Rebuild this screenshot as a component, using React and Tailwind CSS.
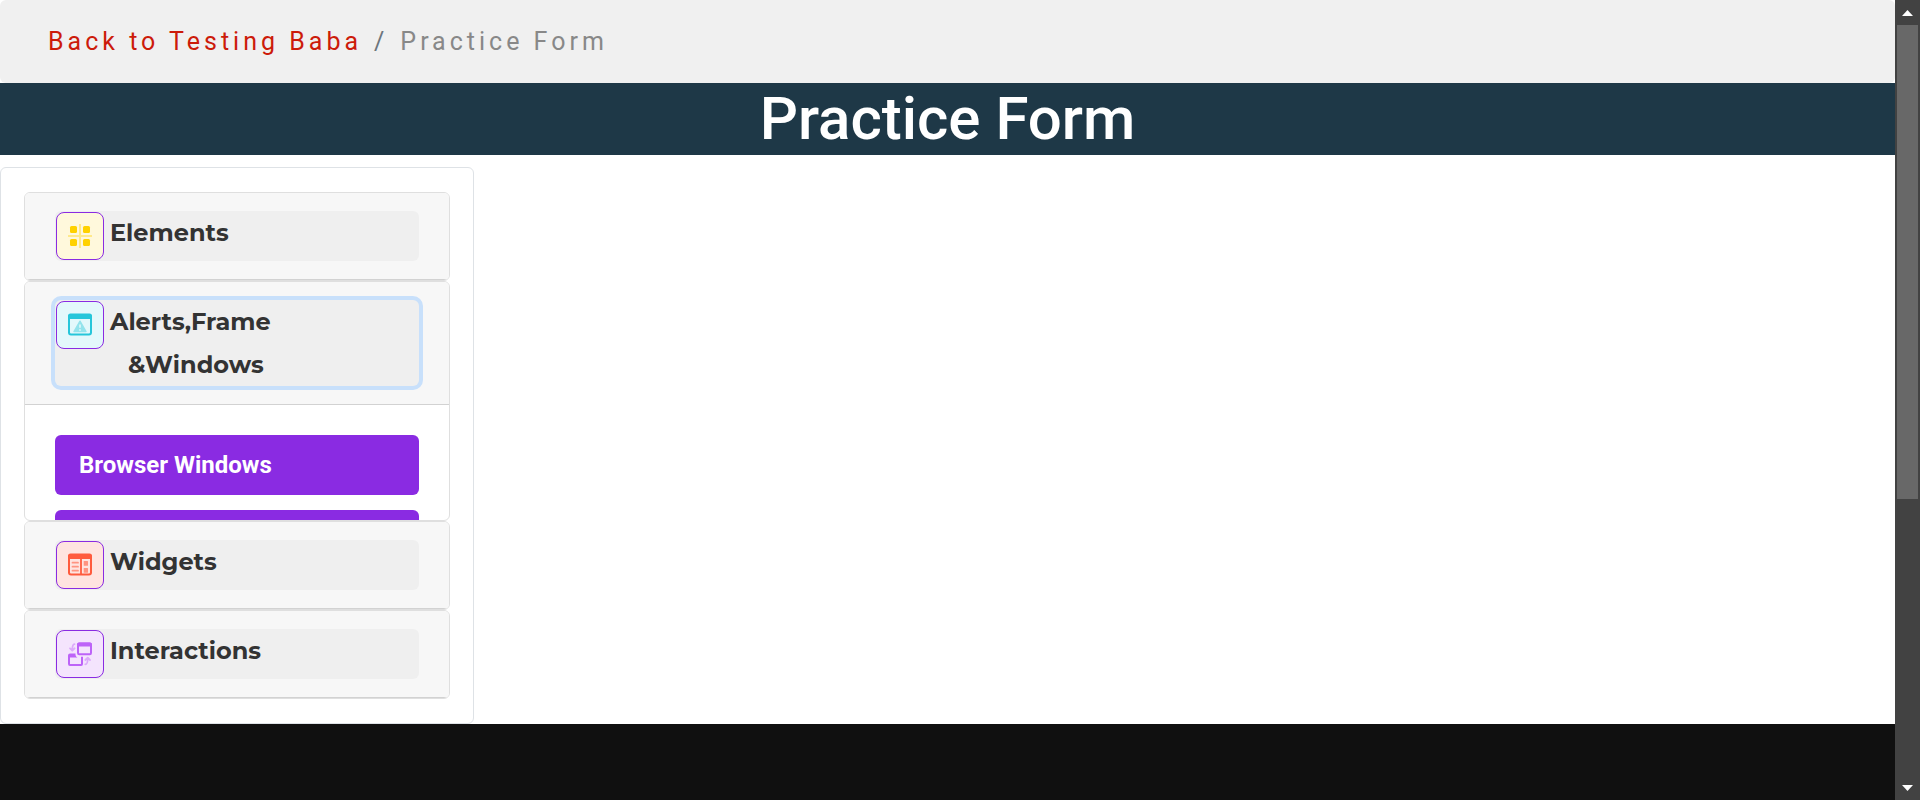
import React from "react";

function ElementsIcon() {
  return (
    <svg viewBox="0 0 24 24" className="size-6" aria-hidden="true">
      <path d="M12 0.5v23M0.5 12h23" stroke="#ffe98a" strokeWidth="2" strokeLinecap="round" />
      <g fill="#ffd100">
        <rect x="2" y="2" width="7" height="7" rx="1.5" />
        <rect x="15" y="2" width="7" height="7" rx="1.5" />
        <rect x="2" y="15" width="7" height="7" rx="1.5" />
        <rect x="15" y="15" width="7" height="7" rx="1.5" />
      </g>
    </svg>
  );
}

function AlertsIcon() {
  return (
    <svg viewBox="0 0 24 24" className="size-6" aria-hidden="true">
      <rect x="1" y="2" width="22" height="19.5" rx="2" fill="none" stroke="#26c6da" strokeWidth="2" />
      <path d="M0 6V3a2.500 2.500 0 0 1 2.500-2.500h19A2.500 2.500 0 0 1 24 3v3z" fill="#26c6da" />
      <path d="M12 8.200L18 18.500H6z" fill="#93e3ec" stroke="#93e3ec" strokeWidth="1.400" strokeLinejoin="round" />
      <path d="M12 11.500v3.200M12 16.200v1.600" stroke="#e3f8fb" strokeWidth="1.600" />
    </svg>
  );
}

function WidgetsIcon() {
  return (
    <svg viewBox="0 0 24 24" className="size-6" aria-hidden="true">
      <rect x="1" y="2" width="22" height="19.5" rx="2" fill="none" stroke="#ff5b3e" strokeWidth="2" />
      <path d="M0 6V3a2.500 2.500 0 0 1 2.500-2.500h19A2.500 2.500 0 0 1 24 3v3z" fill="#ff5b3e" />
      <path d="M13 5v16.500" stroke="#ff5b3e" strokeWidth="1.800" />
      <path d="M4.500 9.700h5.500M4.500 13.700h5.500M4.500 17.700h5.500" stroke="#ff9481" strokeWidth="1.800" strokeLinecap="round" />
      <rect x="15.700" y="8" width="4.300" height="4.700" rx="0.500" fill="#ff9481" />
      <rect x="15.700" y="15" width="4.300" height="4.700" rx="0.500" fill="#ff9481" />
    </svg>
  );
}

function InteractionsIcon() {
  return (
    <svg viewBox="0 0 24 24" className="size-6" aria-hidden="true">
      <path d="M7.500 11.500H2a2 2 0 0 0-2 2V22a2 2 0 0 0 2 2h11a2 2 0 0 0 2-2v-7.200h-2V22H2v-6.500h7.500A3 3 0 0 1 7.500 13z" fill="#bd63f8" />
      <rect x="10" y="1.500" width="13" height="10.700" rx="1.200" fill="none" stroke="#bd63f8" strokeWidth="2" />
      <path d="M9 4.500V2.500a2 2 0 0 1 2-2h11a2 2 0 0 1 2 2v2z" fill="#bd63f8" />
      <g fill="none" stroke="#dcaafb" strokeWidth="1.800" strokeLinecap="round" strokeLinejoin="round">
        <path d="M6.500 2.200C4.800 2.400 4.300 3.500 4.300 8M2 6.300l2.300 2.300 2.300-2.300" />
        <path d="M17.300 22.300c1.900-.2 2.400-1.300 2.400-5.900M17.300 18l2.400-2.300L22 18" />
      </g>
    </svg>
  );
}

function Section({ icon, tile, title, subtitle, open, children }) {
  return (
    <section className="overflow-hidden rounded-md border border-[#dfdfdf]">
      <h2 className="border-b border-[#d2d2d2] bg-[#f7f7f7] px-[30px] py-[18px]">
        <button
          type="button"
          aria-expanded={open}
          className={
            open
              ? "flex w-full items-start gap-[6px] rounded-md bg-[#efefef] px-px text-left text-[#333333] ring-4 ring-[#c8e0fb]"
              : "flex w-full items-start gap-[6px] rounded-md bg-[#efefef] px-px text-left text-[#333333]"
          }
        >
          <span className={`my-px flex size-12 shrink-0 items-center justify-center rounded-lg border border-[#8a2be2] ${tile}`}>
            {icon}
          </span>
          <span className="font-[Montserrat,Inter,sans-serif] text-2xl leading-[43px] font-bold">
            {title}
            {subtitle && <span className="block pl-[18px]">{subtitle}</span>}
          </span>
        </button>
      </h2>
      {children}
    </section>
  );
}

function Scrollbar() {
  return (
    <div className="sticky top-0 flex h-screen w-[25px] shrink-0 flex-col items-center bg-[#424242]" aria-hidden="true">
      <div className="flex h-[25px] items-center justify-center">
        <svg viewBox="0 0 11 6" className="h-[6px] w-[11px]"><path d="M5.500 0L11 6H0z" fill="#fff" /></svg>
      </div>
      <div className="h-[59.25%] w-[21px] bg-[#686868]" />
      <div className="mt-auto flex h-[25px] items-center justify-center">
        <svg viewBox="0 0 11 6" className="h-[6px] w-[11px]"><path d="M0 0h11L5.500 6z" fill="#fff" /></svg>
      </div>
    </div>
  );
}

export default function App() {
  return (
    <div className="flex min-h-screen bg-white font-[Roboto,sans-serif]">
      <div className="flex min-w-0 flex-1 flex-col">
        <nav aria-label="Breadcrumb" className="flex flex-wrap gap-x-3 rounded-md bg-[#f0f0f0] px-12 pt-6 pb-[23px] text-[25px] leading-9 tracking-[4px] text-[#888888]">
          <a href="#home" className="text-[#cc1b0a]">Back to Testing Baba</a>
          <span className="text-[#6c757d]">/</span>
          <span>Practice Form</span>
        </nav>
        <h1 className="bg-[#1e3847] text-center text-[60px] leading-[72px] font-medium text-white">Practice Form</h1>
        <main className="pt-3">
          <div className="w-1/4 rounded-md border border-[#dee2e6] px-[23px] py-6">
            <Section icon={<ElementsIcon />} tile="bg-[#fff8dc]" title="Elements" open={false} />
            <Section icon={<AlertsIcon />} tile="bg-[#e3f8fb]" title="Alerts,Frame" subtitle="&Windows" open={true}>
              <div className="flex h-[115px] flex-col gap-[15px] overflow-hidden px-[30px] pt-[30px]">
                <a href="#browser-windows" className="block shrink-0 rounded-md bg-[#8a2be2] px-6 py-3 text-2xl leading-9 font-bold text-white">
                  Browser Windows
                </a>
                <div className="h-[60px] shrink-0 rounded-md bg-[#8a2be2]" />
              </div>
            </Section>
            <Section icon={<WidgetsIcon />} tile="bg-[#ffe4e0]" title="Widgets" open={false} />
            <Section icon={<InteractionsIcon />} tile="bg-[#f4e4fd]" title="Interactions" open={false} />
          </div>
        </main>
        <footer className="flex-1 bg-[#101010]" />
      </div>
      <Scrollbar />
    </div>
  );
}
